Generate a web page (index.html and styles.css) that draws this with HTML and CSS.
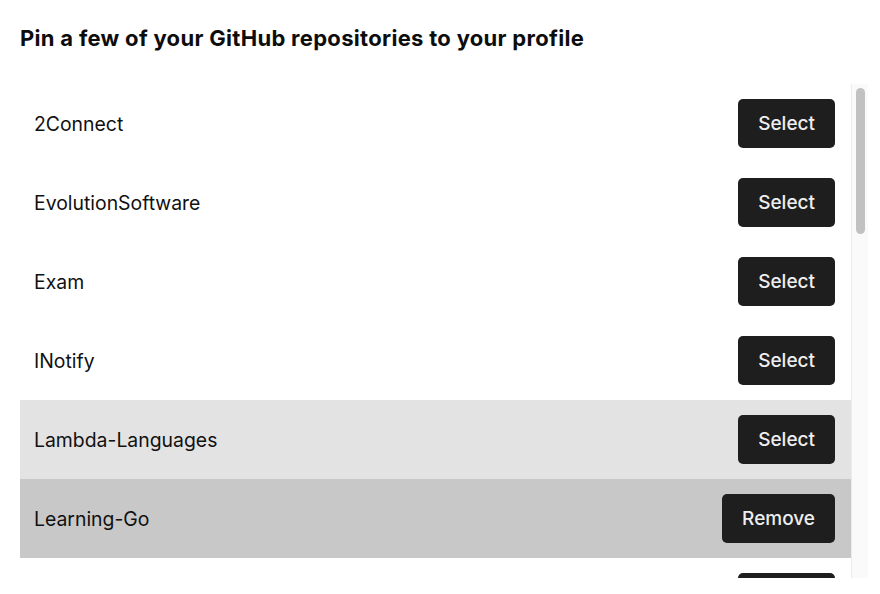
FILE: index.html
```html
<!DOCTYPE html>
<html>
<head>
<meta charset="utf-8">
<link rel="stylesheet" href="styles.css">
</head>
<body>
<div class="page">
  <h1 class="title">Pin a few of your GitHub repositories to your profile</h1>
  <div class="panel">
    <div class="list">
      <div class="row"><span class="name">2Connect</span><button class="btn">Select</button></div>
      <div class="row"><span class="name">EvolutionSoftware</span><button class="btn">Select</button></div>
      <div class="row"><span class="name">Exam</span><button class="btn">Select</button></div>
      <div class="row"><span class="name">INotify</span><button class="btn">Select</button></div>
      <div class="row hover"><span class="name">Lambda-Languages</span><button class="btn">Select</button></div>
      <div class="row selected"><span class="name">Learning-Go</span><button class="btn">Remove</button></div>
      <div class="row"><span class="name">Linux-Scripts</span><button class="btn">Select</button></div>
    </div>
    <div class="scrollbar"><div class="thumb"></div></div>
  </div>
</div>
</body>
</html>
```

FILE: styles.css
```css
* { box-sizing: border-box; }
html, body { margin: 0; padding: 0; background: #ffffff; }
body { font-family: Inter, "Noto Sans", sans-serif; color: #111111; }
.page { padding: 20px 12px 0 20px; }
.title {
  margin: 0;
  font-size: 22px;
  font-weight: 700;
  line-height: 36px;
  letter-spacing: 0.3px;
  color: #0d0d0d;
}
.panel {
  margin-top: 28px;
  height: 494px;
  display: flex;
}
.list {
  flex: 1;
  overflow: hidden;
}
.scrollbar {
  width: 17px;
  background: #fafafa;
  border-left: 1px solid #ececec;
  padding: 4px 3px 0 4px;
}
.thumb {
  height: 146px;
  background: #c1c1c1;
  border-radius: 5px;
}
.row {
  display: flex;
  align-items: center;
  justify-content: space-between;
  height: 79px;
  padding: 0 16px 0 14px;
}
.row.hover { background: #e3e3e3; }
.row.selected { background: #c8c8c8; }
.name { font-size: 19.4px; font-weight: 400; color: #111111; }
.btn {
  height: 49px;
  padding: 0 20px;
  border: none;
  border-radius: 5px;
  background: #1e1e1e;
  color: #eeeeee;
  font-family: Inter, "Noto Sans", sans-serif;
  font-size: 19px;
  font-weight: 500;
}
```
